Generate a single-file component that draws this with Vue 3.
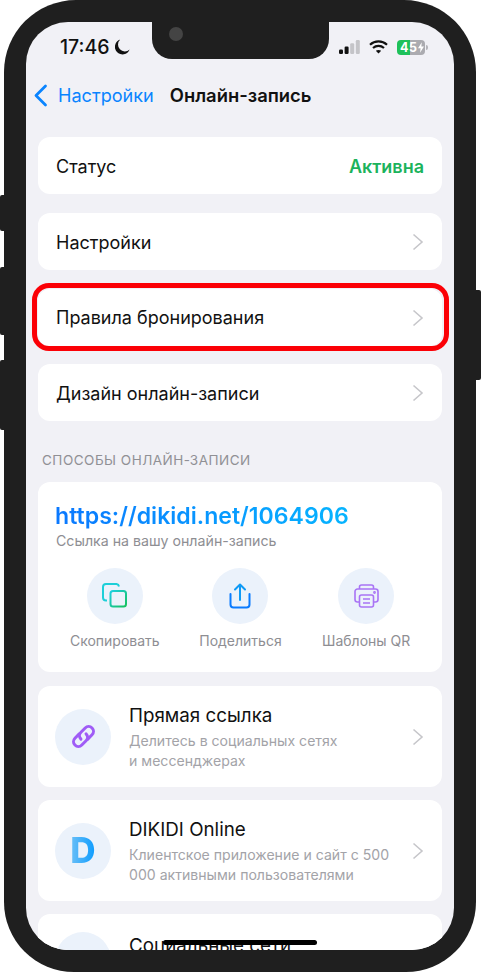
<script setup>
const actions = [
  { label: 'Скопировать', icon: 'copy' },
  { label: 'Поделиться', icon: 'share' },
  { label: 'Шаблоны QR', icon: 'print' },
]
</script>

<template>
  <div class="page">
    <div class="phone">
      <span class="btn btn-a"></span>
      <span class="btn btn-b"></span>
      <span class="btn btn-c"></span>
      <span class="btn-r"></span>
      <div class="screen">
        <div class="notch"><span class="camera"></span></div>
        <div class="status">
          <div class="time">
            <span>17:46</span>
            <svg width="15" height="16" viewBox="0 0 15 16"><path d="M5.2 0.6A7.6 7.6 0 1 0 14.6 10.6 A6.6 6.6 0 0 1 5.2 0.6Z" fill="#111" /></svg>
          </div>
          <div class="sys">
            <svg width="21" height="14" viewBox="0 0 21 14">
              <rect x="0" y="9.5" width="4" height="4.5" rx="1.2" fill="#111" />
              <rect x="5.6" y="6.5" width="4" height="7.5" rx="1.2" fill="#111" />
              <rect x="11.2" y="3.2" width="4" height="10.8" rx="1.2" fill="#c4c4c8" />
              <rect x="16.8" y="0" width="4" height="14" rx="1.2" fill="#c4c4c8" />
            </svg>
            <svg class="wifi" width="19" height="14" viewBox="0 0 19 14" fill="none" stroke="#111" stroke-width="2.2">
              <path d="M1 4.8C5.8 0.3 13.2 0.3 18 4.8" />
              <path d="M4 8C7.2 5.2 11.8 5.2 15 8" />
              <path d="M9.5 13.6L6.8 10.8C8.4 9.6 10.6 9.6 12.2 10.8Z" fill="#111" stroke="none" />
            </svg>
            <div class="battery">
              <span class="batt-text">45</span>
              <svg class="bolt" width="7" height="12" viewBox="0 0 7 12"><path d="M4.4 0L0 6.8H3L2.4 12L7 4.8H3.9Z" fill="#fff" /></svg>
            </div>
            <span class="batt-tip"></span>
          </div>
        </div>

        <div class="nav">
          <svg class="back" width="15" height="23" viewBox="0 0 15 23" fill="none"><path d="M12.5 2L3 11.5L12.5 21" stroke="#0a84ff" stroke-width="2.8" stroke-linecap="round" stroke-linejoin="round" /></svg>
          <span class="back-text">Настройки</span>
          <span class="nav-title">Онлайн-запись</span>
        </div>

        <div class="content">
          <div class="row">
            <span class="row-label">Статус</span>
            <span class="active">Активна</span>
          </div>
          <div class="row">
            <span class="row-label">Настройки</span>
            <svg class="chev" width="12" height="18" viewBox="0 0 12 18" fill="none"><path d="M1.5 1.5L10 9L1.5 16.5" /></svg>
          </div>
          <div class="row highlighted">
            <span class="row-label">Правила бронирования</span>
            <svg class="chev" width="12" height="18" viewBox="0 0 12 18" fill="none"><path d="M1.5 1.5L10 9L1.5 16.5" /></svg>
            <span class="ring"></span>
          </div>
          <div class="row">
            <span class="row-label">Дизайн онлайн-записи</span>
            <svg class="chev" width="12" height="18" viewBox="0 0 12 18" fill="none"><path d="M1.5 1.5L10 9L1.5 16.5" /></svg>
          </div>

          <div class="section">СПОСОБЫ ОНЛАЙН-ЗАПИСИ</div>

          <div class="link-card">
            <div class="url">https://dikidi.net/1064906</div>
            <div class="url-sub">Ссылка на вашу онлайн-запись</div>
            <div class="actions">
              <div v-for="a in actions" :key="a.label" class="action">
                <div class="circle">
                  <svg v-if="a.icon === 'copy'" width="26" height="26" viewBox="0 0 26 26" fill="none" stroke-width="2">
                    <defs><linearGradient id="gc" x1="0" y1="0" x2="1" y2="1"><stop offset="0" stop-color="#1ed0e0" /><stop offset="1" stop-color="#15c15d" /></linearGradient></defs>
                    <path d="M5 17.5H4A3 3 0 0 1 1 14.5V4A3 3 0 0 1 4 1H14.5A3 3 0 0 1 17 3.5" stroke="#1dcfd8" />
                    <rect x="8.5" y="8" width="15.5" height="15.5" rx="2.5" stroke="url(#gc)" />
                  </svg>
                  <svg v-else-if="a.icon === 'share'" width="22" height="26" viewBox="0 0 22 26" fill="none" stroke-width="2" stroke-linecap="round" stroke-linejoin="round">
                    <path d="M11 17V2M6 6.5L11 1.5L16 6.5" stroke="#0f9af5" />
                    <path d="M1.5 11V21.5A3 3 0 0 0 4.5 24.5H17.5A3 3 0 0 0 20.5 21.5V11" stroke="#0a7bff" />
                  </svg>
                  <svg v-else width="25" height="24" viewBox="0 0 25 24" fill="none" stroke="#a974f5" stroke-width="1.6" stroke-linejoin="round">
                    <path d="M5.5 5V3A2 2 0 0 1 7.5 1H17.5A2 2 0 0 1 19.5 3V5" />
                    <path d="M5.5 18H3.5A2.5 2.5 0 0 1 1 15.5V7.5A2.5 2.5 0 0 1 3.5 5H21.5A2.5 2.5 0 0 1 24 7.5V15.5A2.5 2.5 0 0 1 21.5 18H19.5" />
                    <rect x="5.5" y="11" width="14" height="12" rx="2" />
                    <path d="M9 15H16M9 19H16" />
                    <circle cx="20.5" cy="8.5" r="0.6" />
                  </svg>
                </div>
                <span class="action-label">{{ a.label }}</span>
              </div>
            </div>
          </div>

          <div class="big-row first">
            <div class="big-circle">
              <svg width="29" height="29" viewBox="0 0 24 24" fill="none" stroke="#9f5cf6" stroke-width="2.5" stroke-linecap="round">
                <g transform="rotate(-45 12 12)">
                  <path d="M13 16H18A4 4 0 0 0 18 8H13A4 4 0 0 0 9 12" />
                  <path d="M11 8H6A4 4 0 0 0 6 16H11A4 4 0 0 0 15 12" />
                </g>
              </svg>
            </div>
            <div class="big-text">
              <div class="big-title">Прямая ссылка</div>
              <div class="big-sub">Делитесь в социальных сетях<br />и мессенджерах</div>
            </div>
            <svg class="chev" width="12" height="18" viewBox="0 0 12 18" fill="none"><path d="M1.5 1.5L10 9L1.5 16.5" /></svg>
          </div>

          <div class="big-row">
            <div class="big-circle"><span class="logo-d">D</span></div>
            <div class="big-text">
              <div class="big-title">DIKIDI Online</div>
              <div class="big-sub">Клиентское приложение и сайт с 500<br />000 активными пользователями</div>
            </div>
            <svg class="chev" width="12" height="18" viewBox="0 0 12 18" fill="none"><path d="M1.5 1.5L10 9L1.5 16.5" /></svg>
          </div>

          <div class="big-row short">
            <div class="big-circle"></div>
            <div class="big-text">
              <div class="big-title">Социальные сети</div>
            </div>
          </div>
        </div>
        <span class="home"></span>
      </div>
    </div>
  </div>
</template>

<style>
html, body { margin: 0; background: #fff; }
</style>

<style scoped>
.page {
  width: 481px;
  height: 973px;
  overflow: hidden;
  padding-left: 4px;
  box-sizing: border-box;
  font-family: Inter, "Noto Sans", sans-serif;
  background: #fff;
}
.phone {
  position: relative;
  width: 472px;
  height: 972px;
  padding: 22px;
  box-sizing: border-box;
  background: #1f1f1f;
  border-radius: 72px 72px 70px 70px;
}
.btn { position: absolute; left: -4px; width: 5px; background: #1f1f1f; border-radius: 2px 0 0 2px; }
.btn-a { top: 195px; height: 36px; }
.btn-b { top: 267px; height: 68px; }
.btn-c { top: 360px; height: 70px; }
.btn-r { position: absolute; right: -5px; top: 290px; width: 6px; height: 90px; background: #1f1f1f; border-radius: 0 2px 2px 0; }
.screen {
  position: relative;
  width: 428px;
  height: 928px;
  overflow: hidden;
  background: #f1f1f6;
  border-radius: 42px;
}
.notch {
  position: absolute;
  top: 0;
  left: 126px;
  width: 177px;
  height: 37px;
  background: #1f1f1f;
  border-radius: 0 0 20px 20px;
}
.camera {
  position: absolute;
  left: 17px;
  top: 5px;
  width: 14px;
  height: 14px;
  border-radius: 50%;
  background: #444;
}
.status {
  display: flex;
  justify-content: space-between;
  align-items: center;
  height: 26px;
  padding: 12px 26px 0 34px;
}
.time {
  display: flex;
  align-items: center;
  gap: 5px;
  font-size: 19.5px;
  font-weight: 500;
  color: #111;
}
.sys { display: flex; align-items: center; }
.wifi { margin-left: 9px; }
.battery {
  display: flex;
  align-items: center;
  margin-left: 9px;
  width: 28px;
  height: 15px;
  border-radius: 4px;
  padding-left: 3px;
  box-sizing: border-box;
  background: linear-gradient(90deg, #1ec15a 45%, #ababb0 45%);
}
.batt-text { font-size: 12.5px; font-weight: 700; color: #fff; line-height: 15px; letter-spacing: 0.5px; }
.bolt { margin-left: 1px; width: 6px; height: 11px; }
.batt-tip { width: 2px; height: 5px; margin-left: 1px; background: #b5b5ba; border-radius: 0 2px 2px 0; }
.nav {
  display: flex;
  align-items: center;
  height: 46px;
  margin-top: 12px;
  padding-left: 7px;
}
.back { margin-right: 10px; }
.back-text { font-size: 18.1px; color: #0a84ff; }
.nav-title { margin-left: 16px; font-size: 18.4px; font-weight: 600; color: #111; }
.content { display: flex; flex-direction: column; padding: 19px 12px 0; }
.row {
  position: relative;
  display: flex;
  align-items: center;
  justify-content: space-between;
  height: 57px;
  box-sizing: border-box;
  padding: 1px 18px 0;
  margin-bottom: 19px;
  background: #fff;
  border-radius: 12px;
}
.row.highlighted { margin-bottom: 18px; padding-top: 0; }
.row-label { font-size: 18px; color: #111; }
.active { font-size: 18px; font-weight: 600; color: #1bb35c; }
.chev { flex: none; }
.chev path { stroke: #c6c6ca; stroke-width: 1.6; }
.ring {
  position: absolute;
  left: -6px;
  right: -7px;
  top: -6px;
  bottom: -5px;
  border: 5px solid #fb0006;
  border-radius: 17px;
}
.section {
  margin: 11px 0 0 4px;
  font-size: 13.5px;
  letter-spacing: 0.5px;
  line-height: 18px;
  color: #909095;
}
.link-card {
  margin-top: 13px;
  height: 190px;
  box-sizing: border-box;
  padding: 18px 13px 0;
  background: #fff;
  border-radius: 12px;
}
.url {
  margin-left: 4px;
  font-size: 23.1px;
  font-weight: 600;
  line-height: 32px;
  width: fit-content;
  background: linear-gradient(90deg, #0a78ff, #06b4ff);
  -webkit-background-clip: text;
  background-clip: text;
  color: transparent;
}
.url-sub {
  margin-left: 5px;
  font-size: 14.2px;
  line-height: 18px;
  color: #8e8e93;
}
.actions { display: grid; grid-template-columns: repeat(3, 1fr); margin-top: 18px; padding-left: 1px; }
.action { display: flex; flex-direction: column; align-items: center; }
.circle, .big-circle {
  display: flex;
  align-items: center;
  justify-content: center;
  width: 56px;
  height: 56px;
  flex: none;
  border-radius: 50%;
  background: #ebf2fb;
}
.action-label { margin-top: 8px; font-size: 14px; line-height: 18px; color: #8e8e93; }
.big-row {
  display: flex;
  align-items: center;
  height: 101px;
  box-sizing: border-box;
  padding: 0 18px 0 17px;
  margin-top: 13px;
  background: #fff;
  border-radius: 12px;
}
.big-row.first { margin-top: 14px; }
.big-row.short { height: 92px; align-items: flex-start; padding-top: 18px; }
.big-text { flex: 1; margin-left: 18px; padding-top: 1px; }
.big-row.short .big-text { padding-top: 2px; }
.big-title { font-size: 18.8px; line-height: 24px; color: #111; }
.big-sub { margin-top: 3px; font-size: 14.1px; line-height: 20px; color: #a3a3a8; }
.logo-d {
  font-size: 35px;
  font-weight: 800;
  line-height: 1;
  background: linear-gradient(90deg, #6cc0f7, #0a9bff);
  -webkit-background-clip: text;
  background-clip: text;
  color: transparent;
}
.home {
  position: absolute;
  left: 137px;
  bottom: 5px;
  width: 154px;
  height: 5px;
  border-radius: 3px;
  background: #000;
}
</style>
